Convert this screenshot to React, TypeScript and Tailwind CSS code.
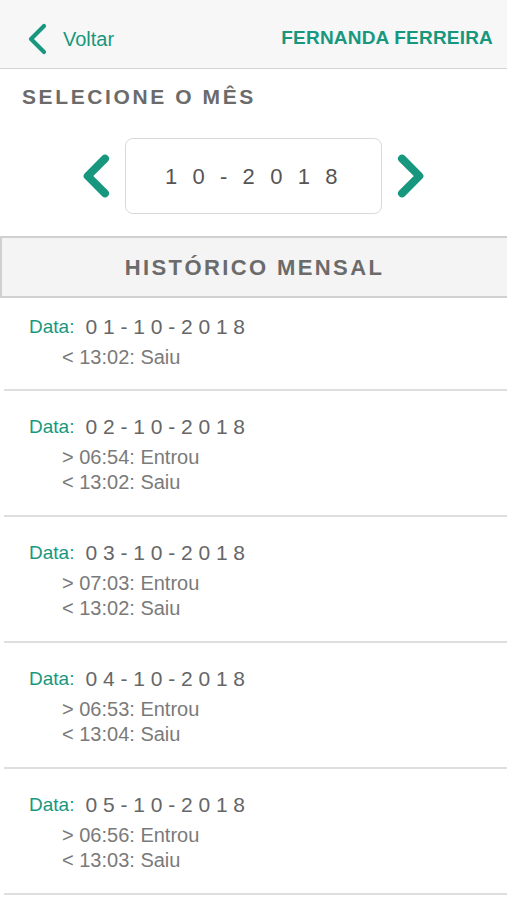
const TEAL = '#17987e';

const dias = [
  { data: '01-10-2018', regs: ['< 13:02: Saiu'] },
  { data: '02-10-2018', regs: ['> 06:54: Entrou', '< 13:02: Saiu'] },
  { data: '03-10-2018', regs: ['> 07:03: Entrou', '< 13:02: Saiu'] },
  { data: '04-10-2018', regs: ['> 06:53: Entrou', '< 13:04: Saiu'] },
  { data: '05-10-2018', regs: ['> 06:56: Entrou', '< 13:03: Saiu'] },
];

function Chevron({ dir, className, width = 6 }: { dir: 'left' | 'right'; className?: string; width?: number }) {
  const points = dir === 'left' ? '18,3 5,16 18,29' : '6,3 19,16 6,29';
  return (
    <svg viewBox="0 0 24 32" className={className} fill="none">
      <polyline points={points} stroke={TEAL} strokeWidth={width} strokeLinecap="round" strokeLinejoin="round" />
    </svg>
  );
}

export default function App() {
  return (
    <div className="min-h-[900px] w-[507px] bg-white font-['Liberation_Sans',Arial,sans-serif]">
      <header className="flex h-[69px] items-center justify-between border-b border-[#d4d4d4] bg-[#f7f7f7] pl-[26px] pr-[14px] pt-[9px]">
        <div className="flex items-center gap-[13px]">
          <Chevron dir="left" width={4.2} className="h-[32px] w-[24px]" />
          <span className="text-[20px] text-[#17987e]">Voltar</span>
        </div>
        <span className="text-[19px] font-bold tracking-[0.2px] text-[#17987e]">FERNANDA FERREIRA</span>
      </header>

      <h2 className="pl-[22px] pt-[16px] text-[21px] font-bold leading-[24px] tracking-[2.6px] text-[#6b6b6b]">SELECIONE O MÊS</h2>

      <div className="mt-[29px] flex items-center justify-center gap-[12px]">
        <Chevron dir="left" className="h-[46px] w-[32px]" />
        <div className="flex h-[76px] w-[257px] items-center justify-center rounded-[8px] border border-[#d9d9d9] text-[22px] tracking-[4.6px] text-[#555]">
          1 0 - 2 0 1 8
        </div>
        <Chevron dir="right" className="h-[46px] w-[32px]" />
      </div>

      <div className="mt-[22px] flex h-[62px] items-center justify-center border-y-2 border-l-2 border-[#d0d0d0] bg-[#f4f4f4] text-[22px] font-bold tracking-[2.4px] text-[#6b6b6b]">
        HISTÓRICO MENSAL
      </div>

      <ul>
        {dias.map((d, i) => (
          <li key={d.data} className={`ml-[4px] border-b-2 border-[#dedede] pl-[25px] ${i === 0 ? 'pt-[16px] pb-[19px]' : 'pt-[23px] pb-[20px]'}`}>
            <div className="flex h-[26px] items-center gap-[11px]">
              <span className="text-[19px] leading-[26px] text-[#17987e]">Data:</span>
              <span className="text-[21px] leading-[26px] tracking-[5.8px] text-[#666]">{d.data}</span>
            </div>
            <div className="mt-[5px] pl-[33px] text-[20px] leading-[25px] text-[#7a7a7a]">
              {d.regs.map((r) => (
                <div key={r}>{r}</div>
              ))}
            </div>
          </li>
        ))}
      </ul>
    </div>
  );
}
